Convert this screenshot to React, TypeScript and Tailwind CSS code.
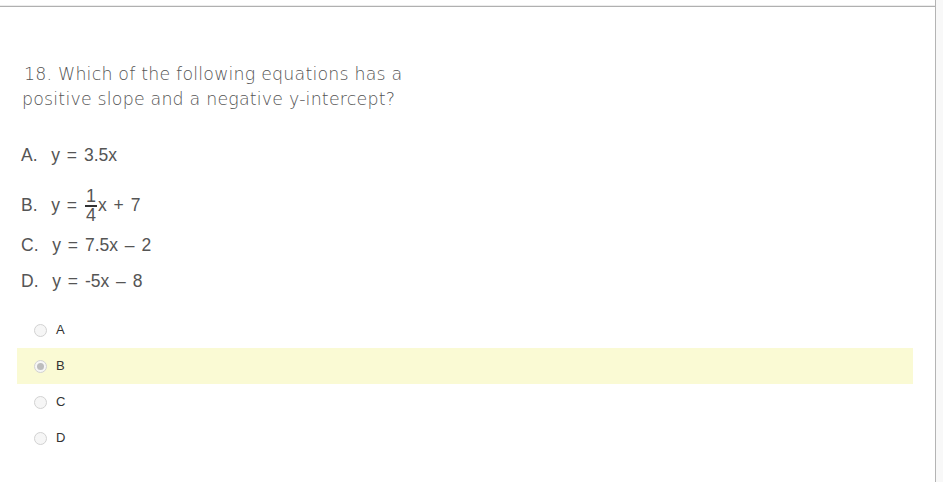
const question = "18. Which of the following equations has a";
const question2 = "positive slope and a negative y-intercept?";

const choices = ["A", "B", "C", "D"];

function Radio({ checked }: { checked: boolean }) {
  return (
    <span className="flex h-[13px] w-[13px] items-center justify-center rounded-full border border-[#d2d2d2] bg-[#f6f6f6]">
      {checked && <span className="h-[7px] w-[7px] rounded-full bg-[#bdbdbd]" />}
    </span>
  );
}

export default function App() {
  return (
    <div className="flex h-[482px] w-[943px] bg-[#f8f8f8]">
      <div className="h-full w-[936px] border-r border-[#b4b4b4] bg-white">
        <div className="h-[6px] border-b border-[#ececec]" />
        <div className="border-t border-[#b0b0b0]">
          <div
            className="pl-[24px] pt-[55px] text-[17.4px] leading-[25px] tracking-[0.2px] text-[#555]"
            style={{ fontFamily: '"DejaVu Sans", sans-serif', fontWeight: 300 }}
          >
            <p>{question}</p>
            <p className="-ml-[2px]">{question2}</p>
          </div>

          <div
            className="pl-[21px] text-[17.5px] text-[#555] [word-spacing:2px]"
            style={{ fontFamily: '"Liberation Sans", Arial, sans-serif' }}
          >
            <p className="mt-[33px] leading-[20px]">A.&nbsp; y = 3.5x</p>
            <div className="mt-[22px] flex h-[36px] items-center">
              <span>B.&nbsp; y =&nbsp;</span>
              <span className="mx-[1px] mt-[2px] inline-flex flex-col items-center text-[18px] leading-[15px]">
                <span>1</span>
                <span className="my-[1px] h-[2px] w-[12px] bg-[#333]" />
                <span>4</span>
              </span>
              <span>x + 7</span>
            </div>
            <p className="mt-[12px] leading-[20px]">C.&nbsp; y = 7.5x – 2</p>
            <p className="mt-[16px] leading-[20px]">D.&nbsp; y = -5x – 8</p>
          </div>

          <div
            className="mt-[21px] text-[13px] text-[#333]"
            style={{ fontFamily: '"Liberation Sans", Arial, sans-serif' }}
          >
            {choices.map((c) => (
              <div
                key={c}
                className={
                  "ml-[17px] flex h-[36px] w-[896px] items-center gap-[9px] pl-[17px] " +
                  (c === "B" ? "bg-[#fafad4]" : "")
                }
              >
                <Radio checked={c === "B"} />
                <span>{c}</span>
              </div>
            ))}
          </div>
        </div>
      </div>
    </div>
  );
}
